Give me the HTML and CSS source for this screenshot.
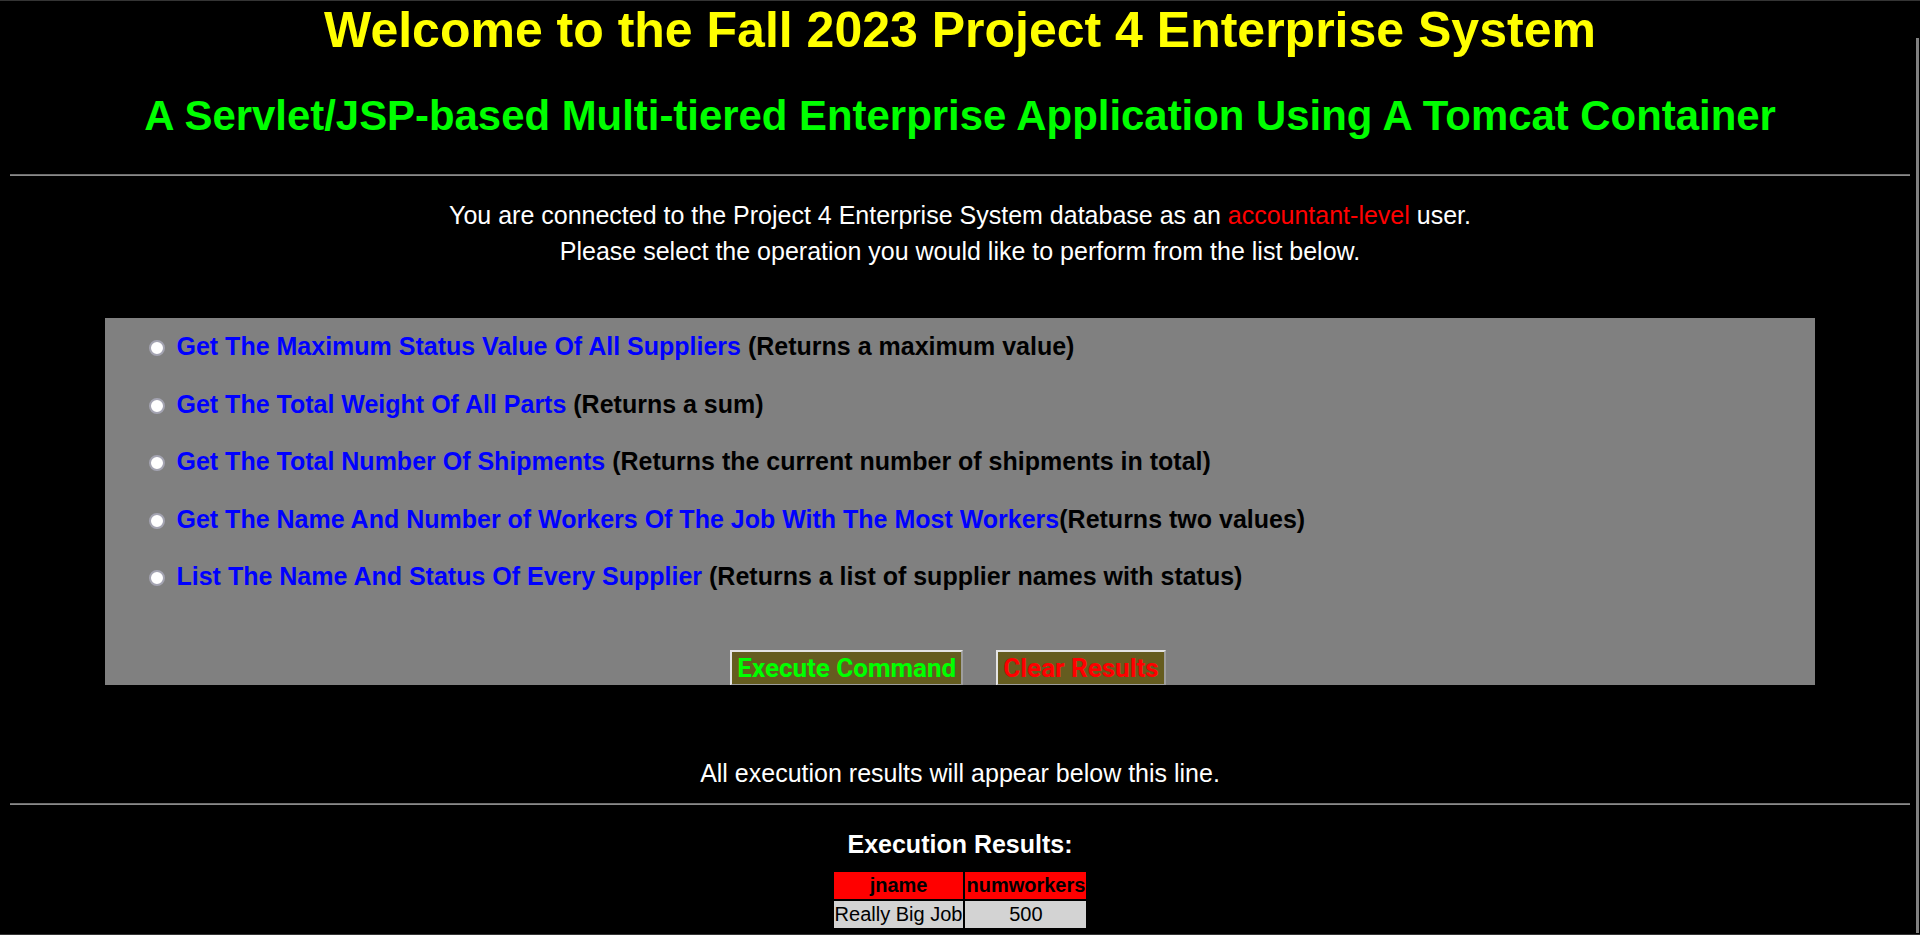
FILE: index.html
```html
<!DOCTYPE html>
<html lang="en">
<head>
<meta charset="utf-8">
<title>Project 4 Enterprise System</title>
<link rel="stylesheet" href="styles.css">
</head>
<body>
<div class="page">
  <h1 class="title">Welcome to the Fall 2023 Project 4 Enterprise System</h1>
  <h2 class="subtitle">A Servlet/JSP-based Multi-tiered Enterprise Application Using A Tomcat Container</h2>
  <hr class="rule rule-top">
  <p class="intro">You are connected to the Project 4 Enterprise System database as an <span class="level">accountant-level</span> user.<br>Please select the operation you would like to perform from the list below.</p>
  <form class="panel">
    <div class="options">
      <label class="option"><input type="radio" name="op" class="radio"><span class="op-name">Get The Maximum Status Value Of All Suppliers</span> (Returns a maximum value)</label>
      <label class="option"><input type="radio" name="op" class="radio"><span class="op-name">Get The Total Weight Of All Parts</span> (Returns a sum)</label>
      <label class="option"><input type="radio" name="op" class="radio"><span class="op-name">Get The Total Number Of Shipments</span> (Returns the current number of shipments in total)</label>
      <label class="option"><input type="radio" name="op" class="radio"><span class="op-name">Get The Name And Number of Workers Of The Job With The Most Workers</span>(Returns two values)</label>
      <label class="option"><input type="radio" name="op" class="radio"><span class="op-name">List The Name And Status Of Every Supplier</span> (Returns a list of supplier names with status)</label>
    </div>
    <div class="actions">
      <button type="button" class="btn btn-exec">Execute Command</button>
      <button type="reset" class="btn btn-clear">Clear Results</button>
    </div>
  </form>
  <p class="note">All execution results will appear below this line.</p>
  <hr class="rule rule-bottom">
  <h3 class="results-title">Execution Results:</h3>
  <table class="results">
    <tr><th>jname</th><th>numworkers</th></tr>
    <tr><td>Really Big Job</td><td>500</td></tr>
  </table>
</div>
<div class="frame-top"></div>
<div class="frame-bottom"></div>
<div class="scroll-thumb"></div>
</body>
</html>
```

FILE: styles.css
```css
html, body {
  margin: 0;
  background: #000;
}
body {
  font-family: "Liberation Sans", Arial, sans-serif;
  color: #fff;
}
.page {
  padding: 0 10px;
}
.title {
  margin: 2px 0 0;
  font-size: 50px;
  line-height: 57px;
  font-weight: bold;
  color: #ffff00;
  text-align: center;
}
.subtitle {
  margin: 33px 0 0;
  font-size: 41.9px;
  line-height: 48px;
  font-weight: bold;
  color: #00ff00;
  text-align: center;
}
.rule {
  margin: 0;
  height: 0;
  border: 0;
  border-top: 1px solid #6e6e6e;
  border-bottom: 1px solid #8a8a8a;
}
.rule-top {
  margin-top: 34px;
}
.intro {
  margin: 21px 0 0;
  font-size: 25px;
  line-height: 36px;
  text-align: center;
}
.level {
  color: #ff0000;
}
.panel {
  width: 90%;
  height: 367px;
  box-sizing: border-box;
  margin: 49px auto 0;
  padding-top: 13px;
  background: #808080;
  overflow: hidden;
}
.options {
  display: flex;
  flex-direction: column;
  gap: 27.5px;
  padding-left: 44px;
}
.option {
  display: block;
  font-size: 25px;
  line-height: 30px;
  font-weight: bold;
  color: #000;
  white-space: nowrap;
}
.radio {
  appearance: none;
  -webkit-appearance: none;
  display: inline-block;
  vertical-align: middle;
  box-sizing: border-box;
  width: 16px;
  height: 16px;
  margin: 0 11.5px 0 0;
  border: 2px solid #a4a4b2;
  border-radius: 50%;
  background: #fff;
}
.op-name {
  color: #0000ff;
}
.actions {
  display: flex;
  justify-content: center;
  gap: 33px;
  margin-top: 59px;
  padding-right: 24px;
}
.btn {
  font-family: Roboto, "Liberation Sans", sans-serif;
  font-weight: bold;
  font-size: 26px;
  line-height: normal;
  padding: 1px 5px;
  border: 2px solid;
  border-color: #e4e4e4 #9e9e9e #9e9e9e #e4e4e4;
  background: #655c1f;
}
.btn-exec {
  color: #00ff00;
}
.btn-clear {
  color: #ff0000;
}
.note {
  margin: 73px 0 0;
  font-size: 25px;
  line-height: 30px;
  text-align: center;
}
.rule-bottom {
  margin-top: 15px;
}
.results-title {
  margin: 24px 0 0;
  font-size: 25px;
  line-height: 30px;
  font-weight: bold;
  text-align: center;
}
.results {
  margin: 11px auto 0;
  border-spacing: 2px;
}
.results th,
.results td {
  padding: 1px;
  font-size: 20px;
  line-height: 25px;
  color: #000;
  text-align: center;
}
.results th {
  background: #ff0000;
  font-weight: bold;
}
.results td {
  background: #d3d3d3;
  font-weight: normal;
}
.frame-top {
  position: fixed;
  top: 0;
  left: 0;
  right: 0;
  height: 1px;
  background: #343434;
}
.frame-bottom {
  position: fixed;
  bottom: 0;
  left: 0;
  right: 0;
  height: 1px;
  background: #343434;
}
.scroll-thumb {
  position: fixed;
  top: 38px;
  bottom: 2px;
  right: 1px;
  width: 3px;
  background: #808080;
}
```
